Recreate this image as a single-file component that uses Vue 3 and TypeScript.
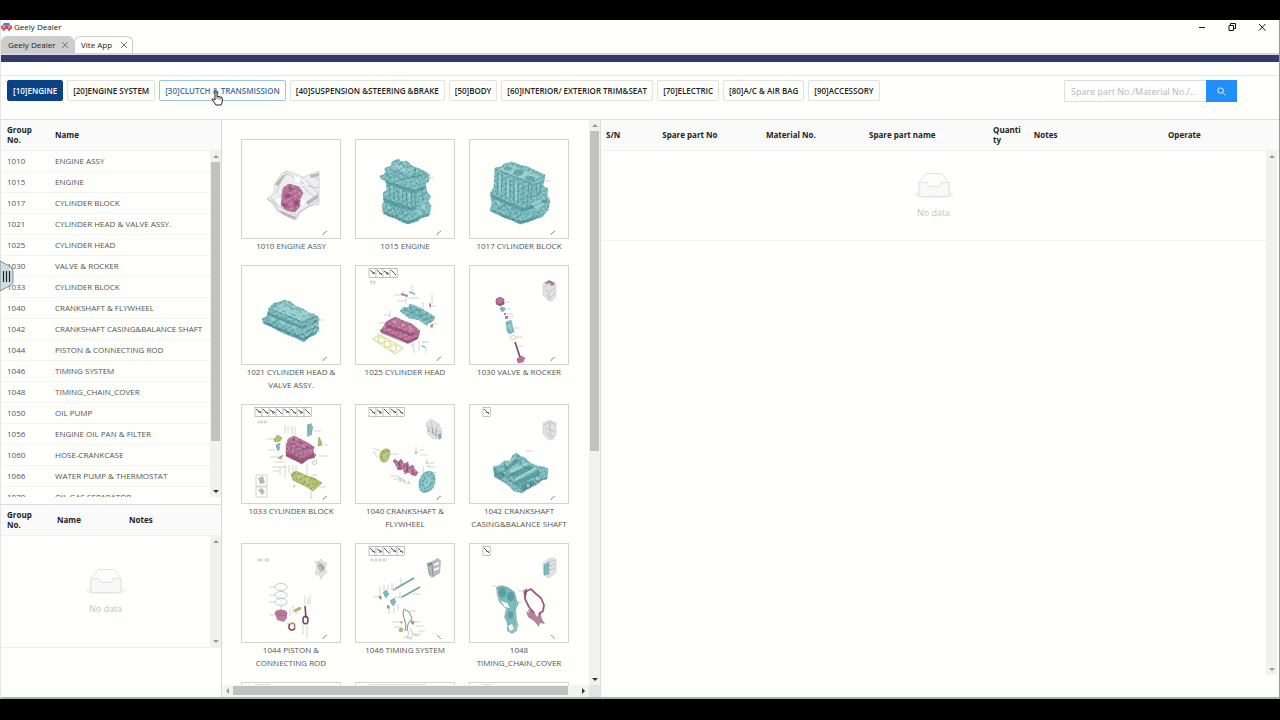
<script setup lang="ts">
import { ref } from 'vue'

type Shape = [kind: string, d: string]
interface Thumb { code: string; name: string; cells?: number; flip?: boolean; shapes: Shape[] }

const categories = [
  '[10]ENGINE', '[20]ENGINE SYSTEM', '[30]CLUTCH & TRANSMISSION', '[40]SUSPENSION &STEERING &BRAKE', '[50]BODY',
  '[60]INTERIOR/ EXTERIOR TRIM&SEAT', '[70]ELECTRIC', '[80]A/C & AIR BAG', '[90]ACCESSORY',
]
const active = ref(0)
const hovered = 2
const query = ref('')

const groups: [string, string][] = [
  ['1010', 'ENGINE ASSY'], ['1015', 'ENGINE'], ['1017', 'CYLINDER BLOCK'], ['1021', 'CYLINDER HEAD & VALVE ASSY.'],
  ['1025', 'CYLINDER HEAD'], ['1030', 'VALVE & ROCKER'], ['1033', 'CYLINDER BLOCK'], ['1040', 'CRANKSHAFT & FLYWHEEL'],
  ['1042', 'CRANKSHAFT CASING&BALANCE SHAFT'], ['1044', 'PISTON & CONNECTING ROD'], ['1046', 'TIMING SYSTEM'],
  ['1048', 'TIMING_CHAIN_COVER'], ['1050', 'OIL PUMP'], ['1056', 'ENGINE OIL PAN & FILTER'], ['1060', 'HOSE-CRANKCASE'],
  ['1066', 'WATER PUMP & THERMOSTAT'], ['1070', 'OIL GAS SEPARATOR'],
]

const miniBlock = 'M73 18L80 15L86 18L86 30L82 35L78 34L73 29Z'
const thumbs: Thumb[] = [
  { code: '1010', name: 'ENGINE ASSY', shapes: [
    ['pale', 'M25 59L32 53L33 44L40 33L46 31L61 37L69 34L77 31V64L66 67L58 73L54 80L44 76L35 71L31 64Z'],
    ['greyline', 'M25 59L31 62L37 71L53 78L57 72L77 60M33 45L41 36L47 34L57 41L66 46L77 48M45 31L39 41L34 53M61 37L57 41M69 34L77 40M64 40L77 55M60 46L77 61M34 65L38 57L41 52M28 57L36 66L54 75'],
    ['greydark', 'M33 44L41 35L43 36L36 46ZM64 62L76 54V58L66 65ZM68 35L77 33V36L69 38ZM38 70L54 77L53 80L40 74Z'],
    ['white', 'M38 57L34 61L38 66L42 60ZM60 59L64 61L60 66L57 64ZM52 36L59 39L57 43L53 41ZM62 42L66 44L64 46Z'],
    ['pink tex', 'M41 48L47 44L57 47L61 53L58 59L58 66L53 72L44 70L39 65L40 57Z'],
    ['pinkdark', 'M42 55L46 53L50 55L48 58L43 58ZM51 61L56 59L57 64L53 68ZM46 48L48 46L51 49L48 51ZM41 63L46 65L45 68L41 66Z'],
  ] },
  { code: '1015', name: 'ENGINE', shapes: [
    ['teal tex', 'M24 36L29 34V28L35 26L36 22L42 19L46 22L51 21L56 26L64 29L68 31L73 34V41L69 44L71 52L75 57L72 61L75 66L73 76L65 77L62 81L52 84L46 82L39 78L32 76L27 73L26 65L28 62L27 53L31 50L30 41L25 39Z'],
    ['tealdark', 'M28 40L41 44L59 50L70 45V48L58 54L42 48L31 44ZM27 57L40 62L55 67L65 64V67L55 71L39 67L28 62ZM28 71L52 81L72 74V76L52 84L28 74Z'],
    ['darkline', 'M33 45L34 59M37 46L38 60M41 47L43 62M46 49L47 63M50 51L51 65M55 53L56 66M59 54V65M66 48L67 60M30 65L33 72L37 67L41 76L45 69L49 78L53 72'],
    ['light', 'M35 46L36 58L37 46ZM44 49L45 61L46 50ZM52 53L54 64L54 53ZM34 27L42 24L59 31L54 34ZM30 66L34 66L33 70ZM60 67L68 63L70 69L63 75Z'],
    ['darkline', 'M35 30L54 38L70 34M39 27L43 31L48 26L53 33L60 29L57 38L65 34M46 22L43 26M30 33L34 38L39 34L45 40L51 37M61 69L70 71M64 66L68 75'],
    ['leader', 'M73 38H78'],
  ] },
  { code: '1017', name: 'CYLINDER BLOCK', shapes: [
    ['teal tex', 'M25 28L31 27L34 24L42 22L50 25L58 27L66 31L75 35L73 46L78 49L77 55L80 61L78 70L72 77L65 79L58 82L50 84L42 80L33 77L27 73L20 71L22 63L20 54L24 47Z'],
    ['light', 'M28 29L40 25L72 37L61 42Z'],
    ['tealdark', 'M34 28a4 2 0 1 0 8 1a4 2 0 1 0-8-1M44 32a5 2.4 0 1 0 9 1a5 2.4 0 1 0-9-1M55 38a5 2.6 0 1 0 10 1a5 2.6 0 1 0-10-1M21 54L53 68L77 59V62L53 72L22 58ZM21 69L50 81L72 75L64 80L50 84L23 73Z'],
    ['darkline', 'M25 29L59 43L75 36M59 43L57 66M28 33L27 55M32 35L31 57M36 37V59M40 39V60M44 40V62M48 42V64M53 43V66M62 44L61 60M66 43L67 57M71 42L69 56M25 61L30 70L34 64L40 75L44 68L48 78L52 72M60 66L68 70L75 64M63 75L72 70'],
    ['light', 'M29 34L29 54L31 54V35ZM37 38V57L39 58V39ZM45 42V60L47 61V43ZM61 64L69 60L75 64L67 71ZM24 60L31 63L29 66Z'],
    ['leader', 'M74 41H80'],
  ] },
  { code: '1021', name: 'CYLINDER HEAD & VALVE ASSY.', shapes: [
    ['teal tex', 'M20 53L25 50L27 42L32 37L38 36L42 34L49 36L53 40L61 43L67 47L72 48L77 52L76 58L77 64L73 69L67 71L62 76L54 72L46 69L37 65L28 60L21 57Z'],
    ['light', 'M30 43L42 36L70 48L61 55Z'],
    ['tealdark', 'M26 46L60 60L75 53V56L60 63L25 49ZM22 55L61 72L75 65L73 68L62 75L22 58Z'],
    ['darkline', 'M29 43L60 56L76 50M33 40L37 43M41 38L44 41M40 45L44 46M48 41L51 44M49 48L54 50M57 44L59 47M60 51L64 50M66 48L69 50M42 37L49 42L59 44M24 52L28 59L33 56L37 64L42 60L46 68L51 63L55 71L60 67L65 73L71 65M63 61L74 56M64 66L75 61'],
    ['light', 'M28 50L34 53L33 55L28 53ZM38 54L44 57L43 59L38 57ZM49 59L55 61L54 64L49 61ZM64 59L72 55L71 57L65 61Z'],
    ['leader', 'M77 54H82'],
  ] },
  { code: '1025', name: 'CYLINDER HEAD', cells: 4, shapes: [
    ['leader', 'M14 16h6M15 14v5M18 14v5M47 25V29M56 19V26M38 29h9M41 35h8M53 32h10M67 36V47M76 28V38M50 38V30M71 55V61M34 45V52M28 49h6M22 67V76M22 57h14M80 40h-5M82 58h-6M56 75V82M63 75V85M58 76V87M73 76h-6M70 80V87'],
    ['teal tex', 'M44 45L48 41L52 42L54 38L62 41L71 46L79 51L77 55L70 59L63 54L53 52Z'],
    ['darkline', 'M48 43L71 54L78 51M54 40L56 45L62 43L65 50L72 48'],
    ['pink tex', 'M24 65L28 60L30 56L39 51L48 55L56 58L64 65L62 72L52 77L44 73L34 69Z'],
    ['pinkdark', 'M25 64L52 75L62 70V73L52 78L25 67ZM31 58L55 67L63 65L55 70L30 61Z'],
    ['light', 'M37 54L41 56L38 58ZM45 57L49 59L47 61ZM53 60L57 63L54 65Z'],
    ['yellowline', 'M17 73L24 69L47 82L39 88ZM23 74a3 2 0 1 0 5 0a3 2 0 1 0-5 0M29 78a3 2 0 1 0 5 0a3 2 0 1 0-5 0M35 82a3 2 0 1 0 5 0a3 2 0 1 0-5 0'],
    ['pinkdark', 'M45 27L52 29V31L45 29ZM73 37L75 38V42L73 40ZM74 59L77 58V61L75 62Z'],
    ['tealdark', 'M53 25L59 27V29L53 27ZM66 75L69 77L66 76ZM65 79L69 80V82L66 81Z'],
  ] },
  { code: '1030', name: 'VALVE & ROCKER', shapes: [
    ['mini', miniBlock], ['greyline', 'M74 21L80 17L85 20M75 24L79 26L85 22M76 29L80 32L85 27M79 26V34'],
    ['pinkdark', 'M74 17L79 14L85 17L82 20L78 18Z'], ['pale', 'M77 17L81 18L80 20Z'],
    ['pink', 'M26 33L30 31L34 33V38L30 40L26 38Z'], ['pinkdark', 'M26 36L30 38L34 35V38L30 40L27 38Z'],
    ['teal', 'M30 42L34 41L35 44L32 46Z'], ['pinkdark', 'M34 47h2v2h-2ZM35 50h3v3h-3Z'],
    ['teal tex', 'M36 56L41 54L44 66L39 68L37 65Z'], ['light', 'M38 58L40 57L42 65L40 65Z'],
    ['yellowline', 'M40 71L44 69L46 72L42 74Z'],
    ['rod', 'M45 76L50 91'], ['pink', 'M47 93L51 90L55 92L53 96L48 97Z'],
    ['leader', 'M34 36h6M35 43h6M37 48h6M38 51h6M44 62h5M46 71h7M48 80h5'],
  ] },
  { code: '1033', name: 'CYLINDER BLOCK', cells: 8, shapes: [
    ['leader', 'M15 17h11M17 15v4M20 15v4M23 15v4M43 28V20M46 28V21M50 31V21M53 31V22M72 26h7M25 34h11M26 45h9M82 40h4M77 51h9M33 57h10M30 62h14M38 62V70M43 60V72M47 60V68M51 60V69M54 60V65M65 60V70M70 70h5M77 82h7M69 86V93M28 52h9M31 66h6M68 93h3'],
    ['tealdark', 'M65 20L70 18V30L65 32Z'], ['teal', 'M66 19L71 22L69 29L66 27Z'],
    ['olive', 'M32 34L36 30L40 33L38 36L33 37ZM77 32L79 36L80 40L76 41ZM36 53L41 50L39 54Z'], ['teal', 'M34 40L38 38L37 46L35 44Z'],
    ['pink tex', 'M44 41L46 34L52 31L58 34L66 38L72 42L71 47L74 50L72 53L66 54L60 59L52 55L44 51Z'],
    ['pinkdark', 'M45 47L60 54L72 48V51L60 58L44 51ZM50 34h3v2h-3ZM57 37h3v2h-3ZM64 41h3v2h-3Z'],
    ['darkline', 'M46 37L61 44L72 42M61 44V54M49 40V49M53 42V51M57 44V53'],
    ['olive tex', 'M49 69L54 66L65 71L72 73L80 78L71 86L65 82L57 78L51 75Z'],
    ['light', 'M55 69L60 72L56 74ZM63 73L68 76L65 79Z'], ['leader', 'M14 70h11v11h-11zM14 82h11v10h-11z'],
    ['greydark', 'M16 73L21 71L23 78L18 79ZM16 85L20 83L23 87L20 90Z'], ['greyline', 'M51 81L53 80L52 83M70 57L74 55L75 58L72 60Z'],
  ] },
  { code: '1040', name: 'CRANKSHAFT & FLYWHEEL', cells: 5, shapes: [
    ['mini', 'M70 18L75 14L83 19L86 27L84 33L77 34L72 29Z'], ['greyline', 'M71 21L85 27M72 25L83 32M75 16L78 31M81 19L80 33'],
    ['tealdark', 'M82 29L85 28L86 33L83 35Z'], ['darkline', 'M72 23L73 27M76 23L77 29M80 25L80 31'],
    ['leader', 'M17 43L27 47M18 46L21 53M34 49h8M60 42V50M58 47h5M63 45h5M64 50h8M71 54V59M69 58h10M72 62h7M67 68V61M53 64h5M34 71h8M37 74h10M42 76h7M45 72V77M48 78h5M76 67L81 68'],
    ['olive tex', 'M24 53Q23 49 26 46T32 44Q35 46 33 52T27 57Q24 56 24 53Z'], ['light', 'M27 52Q28 48 31 48Q31 52 28 54Z'],
    ['pink tex', 'M37 56L39 54L42 57L45 54L48 59L52 57L53 62L57 60L59 65L62 67L60 71L56 70L53 67L49 69L47 64L42 65L40 60Z'],
    ['pinkdark', 'M42 57L43 64L45 64L44 57ZM50 60L50 67L52 67V61ZM57 63L56 69L58 69Z'],
    ['teal tex', 'M63 80Q63 73 67 69T76 67Q80 70 79 77T73 86Q68 89 65 86Q63 84 63 80Z'], ['light', 'M68 79Q69 73 74 72Q77 74 73 80Q69 84 68 79Z'],
    ['darkline', 'M42 71l2 3M47 74l2 3M52 76l2 3M71 61h3M59 48h2'], ['tealdark', 'M70 76h2v2h-2z'],
  ] },
  { code: '1042', name: 'CRANKSHAFT CASING&BALANCE SHAFT', cells: 1, shapes: [
    ['mini', miniBlock], ['greyline', 'M74 20L80 17L86 20M75 23L85 27M76 28L84 32M80 17V34'], ['light', 'M77 28L82 27V32L78 32Z'],
    ['teal tex', 'M23 62L30 60L34 56L40 56L43 50L47 48L50 51L55 53L60 58L67 61L74 62L78 64L77 74L72 75L66 80L57 84L52 88L44 86L38 80L32 76L25 72Z'],
    ['tealdark', 'M24 64L29 68L34 66V73L30 75L24 71ZM33 62L46 53L49 56L36 66ZM40 69L60 60L63 63L44 74ZM43 77L61 69L68 65L70 69L47 81ZM50 80L62 75L66 79L53 87Z'],
    ['light', 'M35 59L45 51L47 52L37 62ZM38 65L55 57L59 59L41 68ZM44 73L65 63L68 64L46 76Z'],
    ['darkline', 'M35 65L41 76M46 57L60 65M24 63L52 85L77 72M68 65L69 79M34 58L41 70M47 50L51 59M31 68L38 72L45 68M55 81a3 3 0 1 0 6-1a3 3 0 1 0-6 1M65 74a3 3 0 1 0 6-1a3 3 0 1 0-6 1'],
    ['light', 'M56 81a2 2 0 1 0 4-1a2 2 0 1 0-4 1M66 74a2 2 0 1 0 4-1a2 2 0 1 0-4 1'], ['leader', 'M56 46h7'],
  ] },
  { code: '1044', name: 'PISTON & CONNECTING ROD', shapes: [
    ['leader', 'M15 16h12M17 14v4M19 14v4M24 14v4M26 14v4M27 43h6M27 51h6M27 58h6M27 71h6M39 62V68M48 65V72M51 61V70M53 69h4M63 52V61M66 54V61M68 51V60M61 78V91M65 78V94M44 80h6'],
    ['mini', 'M73 17L76 18L79 15L81 18L85 19L83 24L85 29L81 31L79 35L77 31L73 30L75 24Z'], ['greydark', 'M75 21L79 19L83 22L81 27L77 26Z'], ['darkline', 'M76 18L82 25L77 29'],
    ['ringline', 'M33 43a6 3.5 0 1 0 12 0a6 3.5 0 1 0-12 0M33 51a6 3.5 0 1 0 12 0a6 3.5 0 1 0-12 0M33 58a6 3.5 0 1 0 12 0a6 3.5 0 1 0-12 0'],
    ['pinkdark', 'M33 69L39 66L45 69V74L42 78L35 76Z'], ['pink', 'M33 69a6 3 0 1 0 12 0a6 3 0 1 0-12 0'],
    ['olive', 'M52 66L58 63L59 65L53 68Z'], ['rod', 'M63 62L64 74'], ['rod', 'M61 76a2 3 0 1 0 5 0a2 3 0 1 0-5 0'],
    ['rod', 'M47 82a3 3.5 0 1 0 6 1a3 3.5 0 1 0-6-1'], ['yellowline', 'M48 80a3 3.5 0 0 1 5 4'],
  ] },
  { code: '1046', name: 'TIMING SYSTEM', cells: 5, flip: true, shapes: [
    ['leader', 'M14 16h17M16 14v4M20 14v4M24 14v4M28 14v4M24 42V51M28 41V48M32 41V47M36 39V46M45 34V42M17 53h7M39 53h8M44 48V54M56 50h9M42 60V66M33 64V70M38 64V69M54 67h6M36 78h8M38 83h8M59 78h6M60 82h8M47 93h10M62 87h7M56 90h9'],
    ['greydark', 'M71 20L82 14L85 17L84 29L76 34L73 31Z'], ['greyline', 'M72 22L84 17M74 26L84 22M75 30L84 26'], ['tealdark', 'M71 19L76 18V21L72 23Z'],
    ['darkline', 'M72 24L74 31M76 20L77 32'], ['white', 'M78 20L83 18V20L78 22ZM78 25L83 23V25L78 27Z'],
    ['shaft', 'M39 45L58 34'], ['shaft', 'M46 53L64 43'], ['teal', 'M27 49L30 46L33 50L30 54ZM34 57L38 54L40 58L37 62Z'],
    ['pinkdark', 'M23 51L26 53L25 56L23 54ZM31 61L34 62L33 65L31 64ZM37 44L39 46L37 47ZM55 76L59 78L57 81L55 79ZM44 77L47 78L45 80Z'],
    ['chain', 'M49 87L50 81L47 70L48 65L53 68L56 74L52 80L51 87'], ['olive', 'M44 84L47 85L46 88L43 87Z'],
    ['greyline', 'M49 85L53 88L51 94L56 95M54 84L57 91L63 92'],
  ] },
  { code: '1048', name: 'TIMING_CHAIN_COVER', cells: 1, flip: true, shapes: [
    ['mini', 'M73 19L80 14L86 15L86 28L79 34L74 31Z'], ['teal', 'M74 21L79 18V30L74 31Z'], ['greyline', 'M79 18L86 16M80 22L85 20M80 26L85 24'],
    ['tealdark', 'M26 43L31 41L38 43L45 48L47 56L49 59L46 66L47 76L48 80L47 87L42 90L37 87L37 79L34 73L36 65L29 58L27 51Z'],
    ['teal', 'M28 44L34 43L42 47L45 54L45 62L43 71L45 79L43 86L39 86L38 77L36 72L39 64L34 57L30 54Z'],
    ['tealdark', 'M29 47a3 4 0 1 0 7 3a3 4 0 1 0-7-3M37 51a3 4 0 1 0 7 3a3 4 0 1 0-7-3M38 71a2 3 0 1 0 5 0a2 3 0 1 0-5 0'],
    ['white', 'M31 57L37 59L40 64L35 63ZM38 82L42 80L44 85L40 87Z'],
    ['pinkframe', 'M55 48L61 45L65 49L71 54L74 61L73 67L69 70M55 48L55 55L59 63L64 69'],
    ['pinkdark', 'M53 47L57 44L57 50L55 54ZM58 65L64 68L67 73L70 67L72 75L75 80L70 79L69 83L64 77L58 73L56 67L59 69Z'],
    ['leader', 'M22 42h4M48 47h6M48 58h4M47 81h3'],
  ] },
]
const cellGlyph = ['M1 2L6 7', 'M1 2L6 6M3 5H6', 'M1 2L6 7M3 5L6 6', 'M1 3L6 6M4 4V7']
const peek = [15, 57, 9]

const partCols = [
  ['S/N', 'c-sn'], ['Spare part No', 'c-no'], ['Material No.', 'c-mat'], ['Spare part name', 'c-name'],
  ['Quantity', 'c-qty'], ['Notes', 'c-notes'], ['Operate', 'c-op'],
]
</script>

<template>
  <div class="screen">
    <div class="window">
      <header class="titlebar">
        <svg class="logo" viewBox="0 0 12 10" aria-hidden="true">
          <path d="M2 4L3 1H9L10 4Z" fill="#5a78b8" />
          <path d="M0 4H12V8H10V10H8V8H4V10H2V8H0Z" fill="#c94a68" />
          <path d="M2 5h2v1H2zM8 5h2v1H8z" fill="#fff" />
        </svg>
        <span class="title">Geely Dealer</span>
        <div class="controls">
          <button type="button" aria-label="Minimize"><svg viewBox="0 0 10 10"><path d="M2 5.5H8" /></svg></button>
          <button type="button" aria-label="Restore"><svg viewBox="0 0 10 10"><path d="M2 3.5H6.500V8.500H2ZM3.500 3.500V1.500H8.500V6.500H6.500" /></svg></button>
          <button type="button" aria-label="Close"><svg viewBox="0 0 10 10"><path d="M2 2L8.500 8.500M8.500 2L2 8.500" /></svg></button>
        </div>
      </header>

      <nav class="tabs">
        <div class="tab tab-grey"><span>Geely Dealer</span><button type="button" aria-label="Close Geely Dealer"><svg viewBox="0 0 8 8"><path d="M1 1L7 7M7 1L1 7" /></svg></button></div>
        <div class="tab"><span>Vite App</span><button type="button" aria-label="Close Vite App"><svg viewBox="0 0 8 8"><path d="M1 1L7 7M7 1L1 7" /></svg></button></div>
      </nav>
      <div class="band"></div>
      <div class="spacer"></div>

      <div class="toolbar">
        <div class="cats">
          <button v-for="(c, i) in categories" :key="c" type="button" class="cat" :class="{ active: i === active, hover: i === hovered }" @click="active = i">
            {{ c }}
            <svg v-if="i === hovered" class="pointer" viewBox="0 0 12 16" aria-hidden="true">
              <path d="M4 10V2Q4 1 5 1T6 2V6.500Q7 5.500 8 6.800Q9 6 9.700 7.200Q11.300 6.800 11.300 8.500V11Q11.300 13 10 15H5Q3 12 1 9.500Q1.500 7.800 4 10Z" fill="#fff" stroke="#222" stroke-width="1" />
              <path d="M6 6.500V9M8 7V9.500M9.700 7.500V9.500" stroke="#333" stroke-width=".7" />
            </svg>
          </button>
        </div>
        <form class="search" @submit.prevent>
          <input v-model="query" type="text" aria-label="Search parts" placeholder="Spare part No./Material No./..." />
          <button type="submit" aria-label="Search"><svg viewBox="0 0 10 10"><circle cx="4" cy="4" r="3" /><path d="M6.200 6.200L9.200 9.200" /></svg></button>
        </form>
      </div>

      <main class="panes">
        <section class="left">
          <div class="box groups">
            <table>
              <colgroup><col class="g-no" /><col /></colgroup>
              <thead><tr><th>Group No.</th><th>Name</th></tr></thead>
              <tbody><tr v-for="g in groups" :key="g[0]"><td>{{ g[0] }}</td><td>{{ g[1] }}</td></tr></tbody>
            </table>
            <div class="vbar under-head"><i class="up"></i><div class="track"><div class="thumb t-groups"></div></div><i class="down dark"></i></div>
          </div>
          <div class="box details">
            <table>
              <colgroup><col class="d-no" /><col class="d-name" /><col /></colgroup>
              <thead><tr><th>Group No.</th><th>Name</th><th>Notes</th></tr></thead>
            </table>
            <div class="empty">
              <svg viewBox="0 0 40 28" aria-hidden="true"><ellipse cx="20" cy="23" rx="20" ry="4" fill="#f3f3f3" /><path d="M5 11L12 2H28L35 11V24H5Z" fill="#fdfdfc" stroke="#e2e2e2" /><path d="M5 11H13Q13 15 16 15H24Q27 15 27 11H35V25H5Z" fill="#f8f8f8" stroke="#e2e2e2" /></svg>
              <span>No data</span>
            </div>
            <div class="vbar under-head"><i class="up"></i><div class="track"></div><i class="down"></i></div>
          </div>
        </section>

        <section class="middle">
          <div class="gallery-row">
            <div class="gallery">
              <figure v-for="t in thumbs" :key="t.code">
                <svg viewBox="0 0 98 98" role="img" :aria-label="t.name">
                  <defs>
                    <pattern :id="'tex' + t.code" width="17" height="13" patternUnits="userSpaceOnUse" patternTransform="rotate(17)">
                      <path d="M0 1H2M5 3L6 2M1 5H3M5 7V8M9 1V3M12 5L14 6M8 9H10M15 2V4M2 10L3 12M13 11H15M7 5H8M11 8V9M16 8H17M5 11H7M10 12V13" stroke="#16464c" stroke-opacity=".45" stroke-width=".9" fill="none" />
                      <path d="M3 1H4M7 1V2M0 3H2M5 5L6 6M10 4H12M15 6V8M1 8H4M7 7L9 8M12 2H13M9 11H12M4 9V10M16 11V13M0 12H1M13 8L14 9" stroke="#fff" stroke-opacity=".4" stroke-width=".9" fill="none" />
                    </pattern>
                  </defs>
                  <g v-if="t.cells">
                    <g v-for="n in t.cells" :key="n" :transform="`translate(${6 + n * 7} 2)`">
                      <rect x="0" y=".5" width="7.200" height="9" class="cell" />
                      <path :d="cellGlyph[(n + t.cells) % 4]" class="glyph" />
                    </g>
                  </g>
                  <template v-for="(s, k) in t.shapes" :key="k">
                    <path :d="s[1]" :class="s[0]" />
                    <path v-if="s[0].endsWith('tex')" :d="s[1]" :fill="`url(#tex${t.code})`" />
                  </template>
                  <path :d="t.flip ? 'M81 91L85 95' : 'M81 95L82 93L85 91'" class="corner" />
                </svg>
                <figcaption>{{ t.code }} {{ t.name }}</figcaption>
              </figure>
              <div v-for="p in peek" :key="p" class="peek"><span :style="{ width: p + 'px' }"></span></div>
            </div>
            <div class="vbar"><i class="up"></i><div class="track"><div class="thumb t-gallery"></div></div><i class="down dark"></i></div>
          </div>
          <div class="hbar"><i class="prev"></i><div class="track"><div class="thumb"></div></div><i class="next"></i><b></b></div>
        </section>

        <section class="right">
          <table>
            <colgroup><col v-for="c in partCols" :key="c[0]" :class="c[1]" /></colgroup>
            <thead><tr><th v-for="c in partCols" :key="c[0]">{{ c[0] }}</th></tr></thead>
          </table>
          <div class="empty">
            <svg viewBox="0 0 40 28" aria-hidden="true"><ellipse cx="20" cy="23" rx="20" ry="4" fill="#f3f3f3" /><path d="M5 11L12 2H28L35 11V24H5Z" fill="#fdfdfc" stroke="#e2e2e2" /><path d="M5 11H13Q13 15 16 15H24Q27 15 27 11H35V25H5Z" fill="#f8f8f8" stroke="#e2e2e2" /></svg>
            <span>No data</span>
          </div>
          <div class="vbar under-head"><i class="up"></i><div class="track"></div><i class="down"></i></div>
        </section>

        <button type="button" class="handle" aria-label="Expand side panel">
          <svg viewBox="0 0 14 32"><path d="M0 1L11 7Q13 9 13 12V22Q13 24 11 25L0 31Z" fill="#cfdce0" stroke="#7d8b90" /><path d="M3.500 11V22M6.500 11V22M9.500 11V22" stroke="#222" stroke-width="1.200" /></svg>
        </button>
      </main>
    </div>
  </div>
</template>

<style>
html, body { background: #000; }
</style>

<style scoped>
* { box-sizing: border-box; }
.screen { height: 100vh; padding: 20px 0 21px; background: #000; font-family: "Open Sans", "Noto Sans", sans-serif; font-size: 8px; color: #444; overflow: hidden; }
.window { height: 100%; display: flex; flex-direction: column; background: #fefefb; border-left: 1px solid #e4e6e6; border-right: 1px solid #999; border-bottom: 2px solid #9db5b2; }
button, input { font: inherit; margin: 0; }
button { padding: 0; border: 0; background: none; cursor: pointer; }
.titlebar { display: flex; align-items: center; height: 16px; padding-bottom: 3px; color: #222; }
.logo { width: 11px; height: 9px; margin-right: 2px; }
.controls { display: flex; gap: 20px; margin-left: auto; padding-right: 12px; }
.controls button { display: flex; }
.controls svg { width: 10px; height: 10px; fill: none; stroke: #111; }
.tabs { display: flex; height: 17px; }
.tab { display: flex; align-items: center; justify-content: space-between; width: 59px; padding: 0 4px 1px 6px; border: 1px solid #ccc; border-bottom: 0; border-radius: 6px 6px 0 0; color: #222; white-space: nowrap; }
.tab-grey { width: 73px; background: #cdcdcd; }
.tab button, .tab svg { display: flex; width: 8px; height: 8px; fill: none; stroke: #777; }
.band { height: 9px; background: #353a6c; border-top: 2px solid #d3d8df; flex: none; }
.spacer { height: 13px; flex: none; }
.toolbar { display: flex; justify-content: space-between; align-items: flex-start; height: 44px; padding: 4px 42px 0 6px; border-top: 1px solid #e8e8e8; flex: none; }
.cats { display: flex; gap: 4px; }
.cat { position: relative; height: 21px; padding: 0 5px; border: 1px solid #e2e2e2; border-radius: 2px; font-weight: 600; color: #222; white-space: nowrap; }
.cat.active { background: #0a4385; border-color: #0a4385; color: #fff; }
.cat.hover { border-color: #9cc4e6; color: #43719f; }
.pointer { position: absolute; left: 51px; top: 9px; width: 12px; height: 16px; fill: none; }
.search { display: flex; width: 173px; height: 22px; }
.search input { flex: 1; min-width: 0; padding: 0 6px; border: 1px solid #ddd; border-right: 0; border-radius: 2px 0 0 2px; background: #fefefd; outline: 0; color: #444; font-size: 9px; text-overflow: ellipsis; }
.search input::placeholder { color: #b9b9b9; opacity: 1; }
.search button { display: flex; align-items: center; justify-content: center; width: 31px; background: #2090f8; }
.search svg { width: 9px; height: 9px; fill: none; stroke: #fff; }
.panes { position: relative; display: flex; flex: 1; min-height: 0; border-top: 1px solid #dcdcdc; }
.left { display: flex; flex-direction: column; width: 221px; border-right: 1px solid #d8d8d8; flex: none; }
.box { position: relative; overflow: hidden; flex: none; }
.groups { height: 377px; }
.details { height: 144px; margin-top: 7px; border-top: 1px solid #ddd; border-bottom: 1px solid #eee; }
table { width: 100%; table-layout: fixed; border-collapse: separate; border-spacing: 0; }
th { height: 31px; padding: 0 5px; background: #fafafa; border-bottom: 1px solid #f0f0f0; font-weight: 700; line-height: 10px; text-align: left; color: #222; }
td { height: 21px; padding: 0 0 1px 6px; border-bottom: 1px solid #f3f3f0; line-height: 12px; white-space: nowrap; color: #555; }
.left th { padding-left: 6px; }
.g-no { width: 48px; }
.d-no { width: 50px; }
.d-name { width: 72px; }
.right th { overflow-wrap: anywhere; }
.c-sn { width: 8.300%; }
.c-no { width: 15.300%; }
.c-mat { width: 15.200%; }
.c-name { width: 18.300%; }
.c-qty { width: 6%; }
.c-notes { width: 19.800%; }
.vbar { display: flex; flex-direction: column; width: 11px; background: #f1f1ee; }
.vbar.under-head { position: absolute; right: 0; top: 31px; bottom: 0; }
.vbar i, .hbar i { position: relative; display: flex; align-items: center; justify-content: center; width: 11px; height: 11px; flex: none; }
.vbar i::after, .hbar i::after { content: ""; border: 3px solid transparent; }
.vbar .up::after { border-top: 0; border-bottom-color: #999; }
.vbar .down::after { border-bottom: 0; border-top-color: #999; }
.vbar .dark::after { border-top-color: #333; }
.track { flex: 1; min-height: 0; min-width: 0; }
.thumb { margin: 0 1px; background: #c1c1bf; }
.t-groups { height: 86%; }
.t-gallery { height: 59%; }
.empty { display: flex; flex-direction: column; align-items: center; height: 90px; margin-right: 13px; padding-top: 20px; border-bottom: 1px solid #f3f3f0; font-size: 9px; line-height: 14px; color: #c4c4c4; }
.empty svg { width: 40px; height: 29px; margin-bottom: 6px; }
.details .empty { height: 112px; margin-right: 11px; padding-top: 31px; }
.middle { display: flex; flex-direction: column; width: 379px; border-right: 1px solid #ddd; flex: none; }
.gallery-row { display: flex; flex: 1; min-height: 0; overflow: hidden; }
.gallery { flex: 1; display: grid; grid-template-columns: repeat(3, 100px); gap: 13px 14px; align-content: start; padding: 19px 0 0 19px; }
figure { margin: 0; text-align: center; }
figure svg { display: block; width: 100px; height: 100px; border: 1px solid #d3d3d0; }
figcaption { line-height: 13px; color: #555; }
.peek { height: 100px; padding: 1px 0 0 13px; border: 1px solid #d3d3d0; }
.peek span { display: block; height: 3px; background: #e0e0de; }
.hbar { display: flex; height: 12px; background: #f4f4f1; flex: none; }
.hbar .thumb { width: 97%; height: 9px; margin: 1px 0; }
.hbar .prev::after { border-left: 0; border-right-color: #999; }
.hbar .next::after { border-right: 0; border-left-color: #333; }
.hbar b { width: 11px; background: #e4e4e2; }
.right { position: relative; flex: 1; min-width: 0; }
.right .vbar { right: 2px; bottom: 22px; }
.handle { position: absolute; left: -1px; top: 140px; width: 14px; height: 32px; }
.handle svg { display: block; width: 14px; height: 32px; fill: none; }

.teal { fill: #7bbcbf; stroke: #5b999d; stroke-width: .6; stroke-dasharray: 3 1; }
.tealdark { fill: #3f888c; fill-opacity: .55; }
.pink { fill: #be719b; stroke: #84506c; stroke-width: .6; stroke-dasharray: 3 1; }
.pinkdark { fill: #8a4468; fill-opacity: .65; }
.olive { fill: #b9bf66; stroke: #84894a; stroke-width: .5; }
.pale { fill: #eeedf0; stroke: #c2c0c4; stroke-width: .6; }
.mini { fill: #e2e1e4; stroke: #c4c2c6; stroke-width: .5; }
.greydark { fill: #b9b8bb; }
.white { fill: #fff; }
.light { fill: #b8e4e4; fill-opacity: .5; }
.darkline { fill: none; stroke: #2c5a60; stroke-opacity: .5; stroke-width: .7; }
.greyline { fill: none; stroke: #bdbcc0; stroke-width: .8; }
.yellowline { fill: none; stroke: #e0e0a4; stroke-width: 1.200; }
.ringline { fill: none; stroke: #a9b5c0; stroke-width: .7; }
.leader { fill: none; stroke: #9aa0a0; stroke-opacity: .7; stroke-width: .6; }
.rod { fill: none; stroke: #7d4460; stroke-width: 1.600; }
.shaft { fill: none; stroke: #6fa9ab; stroke-width: 2; }
.chain { fill: none; stroke: #6b9a96; stroke-width: 1; }
.pinkframe { fill: none; stroke: #a8557f; stroke-width: 1.800; }
.cell { fill: #fff; stroke: #999; stroke-width: .6; }
.glyph { fill: none; stroke: #555; stroke-width: 1; }
.corner { fill: none; stroke: #777; stroke-width: .8; }
</style>
